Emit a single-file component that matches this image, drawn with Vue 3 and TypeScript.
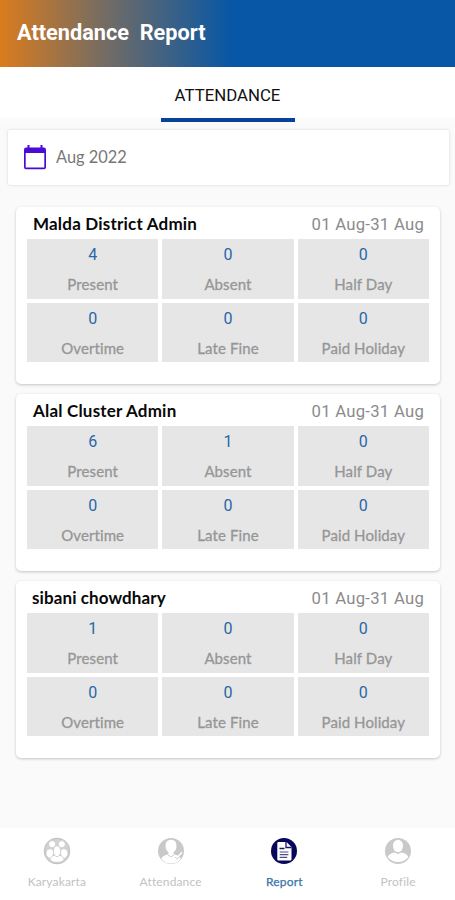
<script setup lang="ts">
interface Stat {
  label: string
  value: number
}

interface Member {
  name: string
  period: string
  stats: Stat[]
}

interface NavItem {
  label: string
  icon: 'group' | 'person' | 'report' | 'profile'
  active: boolean
}

function statsOf(present: number, absent: number): Stat[] {
  return [
    { label: 'Present', value: present },
    { label: 'Absent', value: absent },
    { label: 'Half Day', value: 0 },
    { label: 'Overtime', value: 0 },
    { label: 'Late Fine', value: 0 },
    { label: 'Paid Holiday', value: 0 },
  ]
}

const period = '01 Aug-31 Aug'
const members: Member[] = [
  { name: 'Malda District Admin', period, stats: statsOf(4, 0) },
  { name: 'Alal Cluster Admin', period, stats: statsOf(6, 1) },
  { name: 'sibani chowdhary', period, stats: statsOf(1, 0) },
]

const navItems: NavItem[] = [
  { label: 'Karyakarta', icon: 'group', active: false },
  { label: 'Attendance', icon: 'person', active: false },
  { label: 'Report', icon: 'report', active: true },
  { label: 'Profile', icon: 'profile', active: false },
]
</script>

<template>
  <div class="screen">
    <header class="header"><h1 class="title">Attendance&nbsp; Report</h1></header>
    <div class="tabs"><div class="tab">ATTENDANCE</div></div>

    <main class="content">
      <div class="month">
        <svg class="calendar" viewBox="0 0 24 26">
          <path d="M4.500 1h2v2.500h11V1h2v2.500h1.300Q23 3.500 23 5.700v17.600q0 2-2 2H3q-2 0-2-2V5.700Q1 3.500 3.200 3.500h1.300zM2.700 9v14.600h18.600V9z" fill="#4a0bd6" fill-rule="evenodd" />
        </svg>
        <span class="month-text">Aug 2022</span>
      </div>

      <section v-for="member in members" :key="member.name" class="card">
        <div class="card-head">
          <span class="name">{{ member.name }}</span>
          <span class="period">{{ member.period }}</span>
        </div>
        <div class="grid">
          <div v-for="stat in member.stats" :key="stat.label" class="cell">
            <span class="value">{{ stat.value }}</span>
            <span class="label">{{ stat.label }}</span>
          </div>
        </div>
      </section>
    </main>

    <nav class="nav">
      <div v-for="item in navItems" :key="item.label" class="nav-item" :class="{ active: item.active }">
        <svg class="nav-icon" viewBox="0 0 28 28">
          <g v-if="item.icon === 'group'">
            <circle cx="14" cy="14" r="12.600" fill="#d2d2d2" stroke="#c4c4c4" stroke-width="1.300" />
            <g fill="#fff" stroke="#c8c8c8" stroke-width=".8">
              <circle cx="9.200" cy="7.200" r="3.600" />
              <circle cx="18.800" cy="7.200" r="3.600" />
              <path d="M3 18q-.5-5.500 4-6.500 3.500 0 4 4l-2.500 7Q4.500 21 3 18zM25 18q.5-5.500-4-6.500-3.500 0-4 4l2.500 7q4-1.500 5.500-4.500z" />
              <path d="M7 23.500q.2-4.500 4.500-5.200h5q4.300.7 4.500 5.200-7 4-14 0z" />
              <ellipse cx="14" cy="14.200" rx="3.700" ry="5.500" />
            </g>
          </g>
          <g v-else-if="item.icon === 'person'">
            <circle cx="14" cy="14" r="13" fill="#c9c9c9" />
            <path d="M4.300 22q1.200-3.500 7.200-4.700v-2Q8.500 13 8.500 8.700 8.500 2.700 14 2.700t5.500 6q0 4.300-3 6.600v2q6 1.200 7.200 4.700Q20 26.500 14 26.500T4.300 22z" fill="#fff" />
            <path d="m11 18.200 3 1.800 3-1.800" fill="none" stroke="#d0d0d0" stroke-width="1" />
            <path d="m18 20 2.300 2 4.500-5.500" fill="none" stroke="#c9c9c9" stroke-width="1" />
            <path d="m18.500 18.500 2 1.800 4.500-5" fill="none" stroke="#fff" stroke-width="1.500" />
          </g>
          <g v-else-if="item.icon === 'report'">
            <circle cx="14" cy="14" r="13" fill="#07075c" />
            <path d="M7.300 6q0-1 1-1h8.200l5 5v12.500q0 1-1 1H8.300q-1 0-1-1z" fill="#fff" />
            <path d="M16 5v5.500h5.500M9.500 11.500h5" fill="none" stroke="#191963" stroke-width="1.300" />
            <path d="M9.700 15h8.700M9.700 17.700h8.700M9.700 20.400h7.500" fill="none" stroke="#4d4d82" stroke-width="1.200" />
          </g>
          <g v-else>
            <circle cx="14" cy="14" r="13" fill="#c9c9c9" />
            <ellipse cx="14" cy="9" rx="5" ry="6.200" fill="#fff" />
            <path d="M3.700 20q1.600-3.800 7-4.500l3.300 1.500 3.300-1.500q5.400.7 7 4.500-3.800 5-10.300 5T3.700 20z" fill="#fff" />
          </g>
        </svg>
        <span class="nav-label">{{ item.label }}</span>
      </div>
    </nav>
  </div>
</template>

<style>
body {
  margin: 0;
}
</style>

<style scoped>
.screen {
  display: flex;
  flex-direction: column;
  width: 455px;
  height: 900px;
  overflow: hidden;
  background: #fafafa;
  font-family: Lato, "Liberation Sans", sans-serif;
  font-variant-ligatures: none;
}

.header {
  box-sizing: border-box;
  height: 67px;
  flex: none;
  padding: 19px 17px 0;
  background: linear-gradient(90deg, #da7c1d 0, #6f6b67 110px, #0757a6 232px);
}

.title {
  margin: 0;
  color: #fff;
  font: 700 21.700px/28px Roboto, sans-serif;
  white-space: nowrap;
}

.tabs {
  display: flex;
  justify-content: center;
  height: 56px;
  flex: none;
  background: linear-gradient(#fff 48px, #fafafa);
}

.tab {
  box-sizing: border-box;
  width: 134px;
  height: 55px;
  border-bottom: 4px solid #07419a;
  color: #111;
  font: 400 16.800px/57px Roboto, sans-serif;
  text-align: center;
}

.content {
  flex: 1;
  padding: 7px 15px 0 16px;
}

.month {
  display: flex;
  align-items: center;
  gap: 9px;
  box-sizing: border-box;
  height: 55px;
  margin: 0 -9px 22px -8px;
  padding: 0 15px 1px;
  border-radius: 2px;
  background: #fff;
  box-shadow: 0 0 3px rgba(0, 0, 0, 0.16);
  color: #777;
  font-size: 16.400px;
}

.month-text {
  padding-bottom: 2px;
}

.calendar {
  width: 24px;
  height: 26px;
}

.card {
  box-sizing: border-box;
  height: 177px;
  margin-bottom: 10px;
  padding: 3px 11px 0;
  border-radius: 5px;
  background: #fff;
  box-shadow: 0 1px 3px rgba(0, 0, 0, 0.22);
}

.card-head {
  display: flex;
  justify-content: space-between;
  height: 29px;
  padding: 0 5px 0 6px;
  line-height: 28px;
  white-space: nowrap;
}

.name {
  color: #080808;
  font-size: 17px;
  font-weight: 700;
  letter-spacing: 0.200px;
}

.card:last-child .name {
  margin-left: -1px;
  letter-spacing: 0.100px;
}

.period {
  color: #8b8b8b;
  font-family: Roboto, sans-serif;
  font-size: 16.700px;
  line-height: 29px;
  letter-spacing: 0.250px;
}

.grid {
  display: grid;
  grid-template-columns: repeat(3, 1fr);
  grid-auto-rows: 59.500px;
  gap: 4px;
}

.cell {
  display: flex;
  flex-direction: column;
  align-items: center;
  background: #e6e6e6;
}

.value {
  height: 30px;
  color: #2868a8;
  font-family: Roboto, sans-serif;
  font-size: 16px;
  line-height: 32px;
}

.label {
  color: #969696;
  font-size: 15px;
  line-height: 30px;
  letter-spacing: 0.100px;
  -webkit-text-stroke: 0.300px #969696;
}

.nav {
  display: grid;
  grid-template-columns: repeat(4, 1fr);
  height: 72px;
  flex: none;
  background: #fff;
}

.nav-item {
  display: flex;
  flex-direction: column;
  align-items: center;
  padding-top: 9px;
  color: #c2c2c2;
}

.nav-item.active {
  color: #3a75ad;
}

.nav-icon {
  width: 28px;
  height: 28px;
}

.nav-label {
  margin-top: 8px;
  font-size: 12px;
  line-height: 18px;
  letter-spacing: 0.150px;
}

.active .nav-label {
  -webkit-text-stroke: 0.250px #3a75ad;
}
</style>
